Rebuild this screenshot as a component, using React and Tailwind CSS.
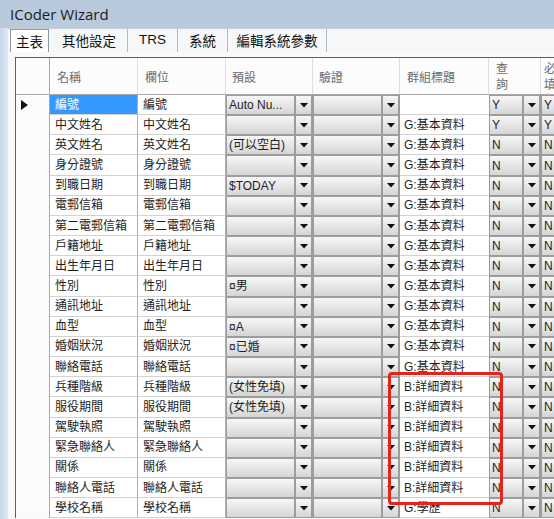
import React from "react";

const rows = [
  ["編號", "編號", "Auto Nu...", "", "Y", "Y"],
  ["中文姓名", "中文姓名", "", "G:基本資料", "Y", "Y"],
  ["英文姓名", "英文姓名", "(可以空白)", "G:基本資料", "N", "N"],
  ["身分證號", "身分證號", "", "G:基本資料", "N", "N"],
  ["到職日期", "到職日期", "$TODAY", "G:基本資料", "N", "N"],
  ["電郵信箱", "電郵信箱", "", "G:基本資料", "N", "N"],
  ["第二電郵信箱", "第二電郵信箱", "", "G:基本資料", "N", "N"],
  ["戶籍地址", "戶籍地址", "", "G:基本資料", "N", "N"],
  ["出生年月日", "出生年月日", "", "G:基本資料", "N", "N"],
  ["性別", "性別", "¤男", "G:基本資料", "N", "N"],
  ["通訊地址", "通訊地址", "", "G:基本資料", "N", "N"],
  ["血型", "血型", "¤A", "G:基本資料", "N", "N"],
  ["婚姻狀況", "婚姻狀況", "¤已婚", "G:基本資料", "N", "N"],
  ["聯絡電話", "聯絡電話", "", "G:基本資料", "N", "N"],
  ["兵種階級", "兵種階級", "(女性免填)", "B:詳細資料", "N", "N"],
  ["服役期間", "服役期間", "(女性免填)", "B:詳細資料", "N", "N"],
  ["駕駛執照", "駕駛執照", "", "B:詳細資料", "N", "N"],
  ["緊急聯絡人", "緊急聯絡人", "", "B:詳細資料", "N", "N"],
  ["關係", "關係", "", "B:詳細資料", "N", "N"],
  ["聯絡人電話", "聯絡人電話", "", "B:詳細資料", "N", "N"],
  ["學校名稱", "學校名稱", "", "G:學歷", "N", "N"],
];

function Arrow() {
  return (
    <svg width="8" height="5" viewBox="0 0 8 5">
      <polygon points="0,0 8,0 4,4.5" fill="#111" />
    </svg>
  );
}

function Combo({ text, widthClass, noButton }) {
  return (
    <div className={`${widthClass} shrink-0 h-full flex bg-[#9c9c9c] pl-[1px] pr-[2px] gap-[2px] py-[1px]`}>
      <div className="flex-1 min-w-0 bg-linear-to-b from-[#f7f7f7] to-[#d5d5d5] flex items-center pl-[2px] text-[12px] text-[#1e1e1e] whitespace-nowrap overflow-hidden">
        {text}
      </div>
      {!noButton && (
        <div className="w-[15px] shrink-0 bg-linear-to-b from-[#f7f7f7] to-[#d5d5d5] flex items-center justify-center">
          <Arrow />
        </div>
      )}
    </div>
  );
}

function TextCell({ text, widthClass, selected }) {
  return (
    <div
      className={`${widthClass} shrink-0 h-full flex items-center border-r border-b border-r-[#b0b0b0] border-b-[#d2d2d2] whitespace-nowrap overflow-hidden text-[12px] ${
        selected ? "bg-[#3399ff] text-white" : "bg-white text-[#1e1e1e]"
      }`}
    >
      <span className={selected ? "bg-[#3399ff] pl-[5px] pr-[50px] h-full flex items-center" : "pl-[5px]"}>{text}</span>
    </div>
  );
}

export default function App() {
  return (
    <div className="relative w-[554px] h-[519px] overflow-hidden bg-linear-to-b from-[#b8c9dc] to-[#d6e2ef] font-['Liberation_Sans','Noto_Sans_CJK_TC',sans-serif]">
      {/* title bar */}
      <div className="h-[28px] flex items-center pl-[10px] text-[15px] text-[#1a1a1a] font-['Open_Sans','Noto_Sans_CJK_TC',sans-serif]">
        ICoder Wizard
      </div>
      <div className="flex h-[491px]">
        {/* left frame */}
        <div className="w-[8px] shrink-0 bg-linear-to-r from-[#c6d7ea] to-[#dfe9f4]" />
        <div className="flex-1 flex flex-col bg-[#f6f7f9] border-t border-[#c4ccd6]">
          {/* tabs */}
          <div className="h-[23px] flex items-stretch pl-[2px] text-[13.5px] text-[#111] font-['Noto_Sans_CJK_TC',sans-serif]">
            <div className="w-[39px] bg-white border border-b-0 border-[#8d98a6] flex items-center justify-center">主表</div>
            <div className="w-[79px] border-r border-[#b5bac2] flex items-center justify-center pl-[2px]">其他設定</div>
            <div className="w-[50px] border-r border-[#b5bac2] flex items-center justify-center font-['Liberation_Sans',sans-serif]">TRS</div>
            <div className="w-[50px] border-r border-[#b5bac2] flex items-center justify-center">系統</div>
            <div className="w-[99px] border-r border-[#b5bac2] flex items-center justify-center">編輯系統參數</div>
          </div>
          {/* page */}
          <div className="flex-1 pl-[7px] pt-[5px] bg-[#f9f9f9]">
            <div className="border-l border-t border-[#5f5f5f] bg-white font-['Liberation_Sans','Noto_Sans_CJK_TC',sans-serif]">
              {/* header */}
              <div className="h-[37px] flex border-b border-[#a8a8a8] bg-[#fcfcfc] text-[12px] text-[#6b6b6b]">
                <div className="w-[34px] shrink-0 border-r border-[#a8a8a8]" />
                <div className="w-[88px] shrink-0 border-r border-[#dedede] flex items-center pl-[7px] pt-[3px]">名稱</div>
                <div className="w-[88px] shrink-0 border-r border-[#dedede] flex items-center pl-[7px] pt-[3px]">欄位</div>
                <div className="w-[87px] shrink-0 border-r border-[#dedede] flex items-center pl-[6px] pt-[3px]">預設</div>
                <div className="w-[87px] shrink-0 border-r border-[#dedede] flex items-center pl-[6px] pt-[3px]">驗證</div>
                <div className="w-[89px] shrink-0 border-r border-[#dedede] flex items-center pl-[7px] pt-[3px]">群組標題</div>
                <div className="w-[52px] shrink-0 border-r border-[#dedede] flex flex-col justify-center pl-[7px] leading-[16px] pt-[2px]">
                  <span>查</span>
                  <span>詢</span>
                </div>
                <div className="w-[60px] shrink-0 flex flex-col justify-center pl-[3px] leading-[16px] pt-[2px]">
                  <span>必</span>
                  <span>填</span>
                </div>
              </div>
              {/* rows */}
              {rows.map((r, i) => (
                <div key={i} className="h-[20.17px] flex">
                  <div className="w-[34px] shrink-0 h-full border-r border-[#a8a8a8] bg-[#fbfbfb] flex items-center pl-[5px]">
                    {i === 0 && (
                      <svg width="7" height="10" viewBox="0 0 7 10">
                        <polygon points="0,0 7,5 0,10" fill="#111" />
                      </svg>
                    )}
                  </div>
                  <TextCell text={r[0]} widthClass="w-[88px]" selected={i === 0} />
                  <TextCell text={r[1]} widthClass="w-[88px]" />
                  <Combo text={r[2]} widthClass="w-[87px]" />
                  <Combo text="" widthClass="w-[87px]" />
                  <div className="w-[89px] shrink-0 h-full flex items-center bg-white border-b border-[#d2d2d2] text-[12px] text-[#1e1e1e] whitespace-nowrap overflow-hidden pl-[4px]">
                    {r[3]}
                  </div>
                  <Combo text={r[4]} widthClass="w-[52px]" />
                  <Combo text={r[5]} widthClass="w-[60px]" />
                </div>
              ))}
            </div>
          </div>
        </div>
      </div>
      {/* red highlight */}
      <div className="absolute left-[388px] top-[372px] w-[115px] h-[133px] border-[3px] border-[#e3231e] rounded-[4px]" />
    </div>
  );
}
